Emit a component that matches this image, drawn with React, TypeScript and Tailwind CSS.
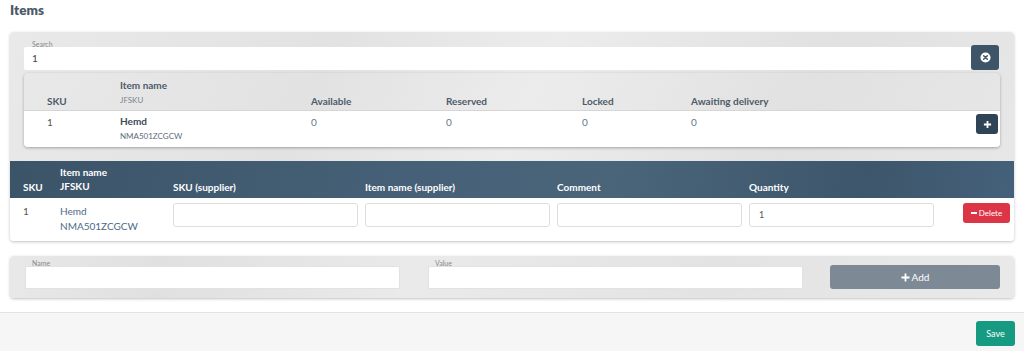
import React from 'react';

const font = { fontFamily: 'Lato, "Open Sans", sans-serif' };

function FloatInput({ label, value, className }: { label: string; value?: string; className?: string }) {
  return (
    <div className={`relative ${className ?? ''}`}>
      <span className="absolute left-[7px] top-[-6px] text-[7px] text-[#8a8a8a] leading-none">{label}</span>
      <div className="h-[23px] bg-white rounded-[2px] border border-[#e2e2e2] flex items-center pl-[8px] text-[10px] text-[#444]">
        {value}
      </div>
    </div>
  );
}

function CellInput({ value }: { value?: string }) {
  return (
    <div className="w-[185px] h-[24px] bg-white border border-[#dedede] rounded-[3px] flex items-center pl-[9px] text-[9px] text-[#555]">
      {value}
    </div>
  );
}

export default function App() {
  return (
    <div className="w-[1024px] h-[351px] bg-white flex flex-col text-[#4b5866]" style={font}>
      <div className="px-[10px]">
        <h2 className="h-[32px] pt-[2px] text-[13.5px] font-extrabold text-[#4c5a68] leading-[16px]">Items</h2>

        <div className="rounded-[4px] overflow-hidden shadow-[0_1px_3px_rgba(0,0,0,0.25)] bg-[linear-gradient(115deg,#e9e9e9_0%,#e2e2e2_30%,#ececec_50%,#e1e1e1_75%,#e8e8e8_100%)]">
          <div className="px-[14px] pt-[15px] pb-[14px]">
            <div className="flex">
              <div className="relative flex-1">
                <span className="absolute left-[8px] top-[-6px] text-[7px] text-[#8a8a8a] leading-none">Search</span>
                <div className="h-[23px] bg-white rounded-l-[2px] flex items-center pl-[8px] text-[10px] text-[#444]">1</div>
              </div>
              <button className="w-[28px] h-[25px] -mt-[2px] mr-[1px] bg-[#3e5568] rounded-[3px] flex items-center justify-center">
                <svg width="11" height="11" viewBox="0 0 12 12">
                  <circle cx="6" cy="6" r="5.5" fill="#fff" />
                  <path d="M4 4l4 4M8 4l-4 4" stroke="#3e5568" strokeWidth="1.6" strokeLinecap="round" />
                </svg>
              </button>
            </div>

            <div className="mt-[3px] rounded-[4px] overflow-hidden shadow-[0_1px_3px_rgba(0,0,0,0.3)]">
              <div className="h-[38px] flex pl-[23px] text-[10px] font-bold text-[#4d5b69] border-b border-[#d6d6d6]">
                <div className="w-[73px] pt-[21px]">SKU</div>
                <div className="w-[191px] pt-[6px] leading-[12px]">
                  <div>Item name</div>
                  <div className="mt-[3px] text-[8px] font-normal text-[#7a858f]">JFSKU</div>
                </div>
                <div className="w-[135px] pt-[21px]">Available</div>
                <div className="w-[136px] pt-[21px]">Reserved</div>
                <div className="w-[109px] pt-[21px]">Locked</div>
                <div className="pt-[21px]">Awaiting delivery</div>
              </div>
              <div className="h-[36px] bg-white flex pl-[23px] text-[10px] relative">
                <div className="w-[73px] pt-[4px] text-[#555]">1</div>
                <div className="w-[191px] pt-[4px] leading-[12px]">
                  <div className="font-bold text-[#3c4a57]">Hemd</div>
                  <div className="mt-[3px] text-[8px] text-[#5c6b7a]">NMA501ZCGCW</div>
                </div>
                <div className="w-[135px] pt-[4px] text-[#5f7890]">0</div>
                <div className="w-[136px] pt-[4px] text-[#5f7890]">0</div>
                <div className="w-[109px] pt-[4px] text-[#5f7890]">0</div>
                <div className="pt-[4px] text-[#5f7890]">0</div>
                <button className="absolute right-[2px] top-[3px] w-[22px] h-[20px] bg-[#2f4557] rounded-[3px] flex items-center justify-center">
                  <svg width="9" height="9" viewBox="0 0 10 10">
                    <path d="M5 1v8M1 5h8" stroke="#fff" strokeWidth="2" />
                  </svg>
                </button>
              </div>
            </div>
          </div>

          <div className="h-[37px] flex pl-[13px] text-[10px] font-bold text-white bg-[linear-gradient(100deg,#3b5468_0%,#466077_40%,#4a647a_60%,#3d566b_85%,#45607a_100%)]">
            <div className="w-[37px] pt-[19px]">SKU</div>
            <div className="w-[113px] pt-[5px] leading-[12px]">
              <div>Item name</div>
              <div className="mt-[2px]">JFSKU</div>
            </div>
            <div className="w-[192px] pt-[19px]">SKU (supplier)</div>
            <div className="w-[192px] pt-[19px]">Item name (supplier)</div>
            <div className="w-[192px] pt-[19px]">Comment</div>
            <div className="pt-[19px]">Quantity</div>
          </div>
          <div className="h-[43px] bg-white flex pl-[13px] text-[10px]">
            <div className="w-[37px] pt-[6px] text-[#555]">1</div>
            <div className="w-[113px] pt-[6px] leading-[14px] text-[#4d6a85]">
              <div>Hemd</div>
              <div className="mt-[1px]">NMA501ZCGCW</div>
            </div>
            <div className="flex gap-[7px] pt-[5px]">
              <CellInput />
              <CellInput />
              <CellInput />
              <CellInput value="1" />
            </div>
            <div className="ml-auto mr-[4px] pt-[5px]">
              <button className="h-[20px] w-[47px] bg-[#dc3545] rounded-[3px] flex items-center justify-center gap-[2px] text-white text-[8px]">
                <span className="w-[6px] h-[2px] bg-white" />
                Delete
              </button>
            </div>
          </div>
        </div>

        <div className="mt-[15px] rounded-[4px] shadow-[0_1px_3px_rgba(0,0,0,0.25)] bg-[linear-gradient(100deg,#e8e8e8_0%,#e0e0e0_15%,#eaeaea_40%,#e3e3e3_70%,#e9e9e9_100%)] pl-[15px] pr-[14px] pt-[10px] pb-[9px] flex items-start">
          <FloatInput label="Name" className="w-[375px]" />
          <FloatInput label="Value" className="w-[375px] ml-[28px]" />
          <button className="ml-auto -mt-[1px] w-[170px] h-[24px] bg-[#7d8a95] rounded-[3px] flex items-center justify-center gap-[2px] text-white text-[10px]">
            <svg width="9" height="9" viewBox="0 0 10 10">
              <path d="M5 0.5v9M0.5 5h9" stroke="#fff" strokeWidth="2" />
            </svg>
            Add
          </button>
        </div>
      </div>

      <div className="mt-[14px] flex-1 border-t border-[#e4e4e4] bg-[#f6f6f6] flex justify-end items-start pt-[8px] pr-[9px]">
        <button className="w-[39px] h-[25px] bg-[#169a82] rounded-[3px] text-white text-[9px]">Save</button>
      </div>
    </div>
  );
}
